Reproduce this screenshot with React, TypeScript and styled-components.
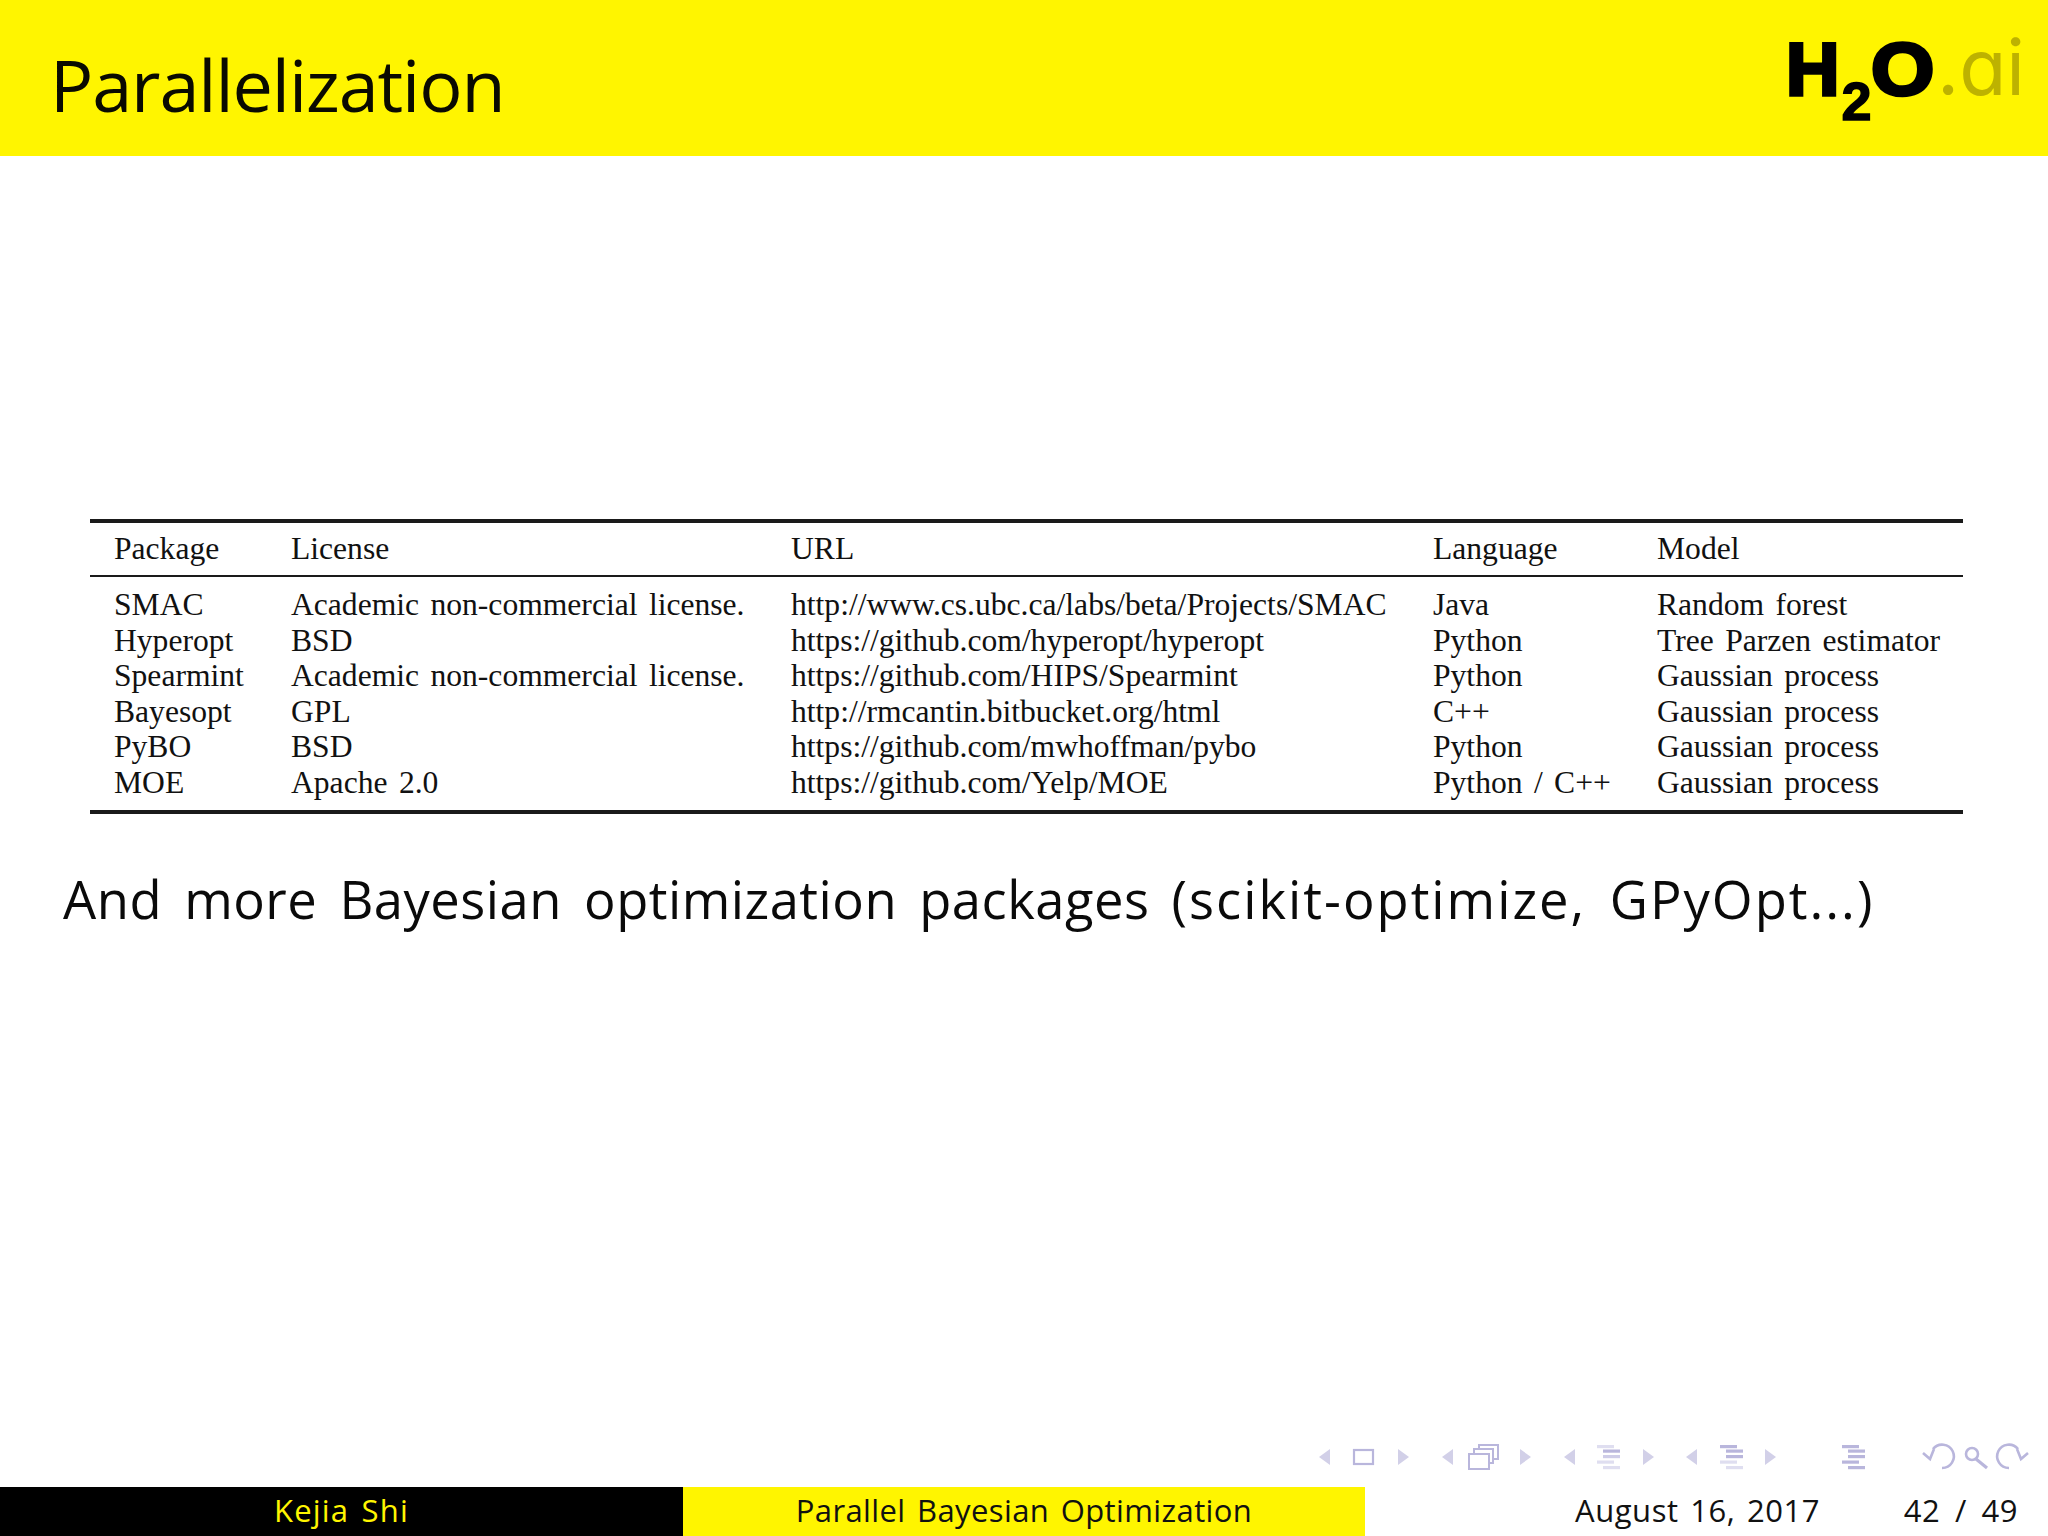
import React from "react";
import styled, { createGlobalStyle } from "styled-components";

const Global = createGlobalStyle`
  html, body { margin: 0; padding: 0; background: #fff; }
  #root { width: 2048px; height: 1536px; overflow: hidden; }
`;
const SANS = `"Open Sans", "Noto Sans", sans-serif`;
const YELLOW = "#fff500";
const NAV = "#b9b6dc";
const NAV_MID = "#cfcde8";
const NAV_PALE = "#dfdef0";

const Page = styled.div`
  width: 2048px; height: 1536px; display: flex; flex-direction: column;
  font-family: ${SANS}; color: #000; background: #fff;
`;
const Header = styled.header`
  height: 156px; flex: none; background: ${YELLOW}; display: flex; align-items: center;
  justify-content: space-between; padding: 0 23px 0 50px; box-sizing: border-box;
`;
const Title = styled.h1`
  margin: 0; font-size: 72px; font-weight: 400; line-height: 1; letter-spacing: -1.1px; color: #0a0a00;
  position: relative; top: 6px;
`;
const Logo = styled.div`
  display: flex; align-items: baseline; position: relative; top: -10px; white-space: nowrap;
  font-family: "Liberation Sans", Arial, sans-serif; line-height: 1;
`;
const LogoH = styled.span`font-size: 74px; font-weight: 700; -webkit-text-stroke: 3.5px #000; color: #000;`;
const LogoO = styled.span`
  font-size: 74px; font-weight: 700; -webkit-text-stroke: 3.5px #000; color: #000;
  display: inline-block; transform: scaleX(1.1); margin: 0 5px 0 2px;
`;
const LogoSub = styled.span`font-size: 54px; font-weight: 700; color: #000; -webkit-text-stroke: 1.5px #000; position: relative; top: 25px; margin: 0 1px 0 2px;`;
const LogoLight = styled.span`
  font-family: Inter, ${SANS}; font-weight: 400; font-size: 77px; color: #bdb200; letter-spacing: 0;
  font-feature-settings: "cv11" 1;
`;

const Main = styled.main`
  flex: 1; display: flex; flex-direction: column; padding: 363px 85px 0 90px; min-height: 0;
`;
const Table = styled.div`
  font-family: "Liberation Serif", "Times New Roman", serif; font-size: 31.6px; color: #111;
  border-top: 4px solid #1a1a1a; border-bottom: 4px solid #1a1a1a; padding-bottom: 10px;
`;
const Cols = "177px 500px 642px 224px 1fr";
const HeadRow = styled.div`
  display: grid; grid-template-columns: ${Cols}; padding-left: 24px; height: 52px; align-items: center;
  border-bottom: 2px solid #1a1a1a; margin-bottom: 10px;
`;
const Row = styled.div`
  display: grid; grid-template-columns: ${Cols}; padding-left: 24px; height: 35.5px; align-items: center;
  white-space: nowrap; word-spacing: 3.5px;
`;
const Url = styled.span`word-spacing: 0;`;
const Body = styled.p`
  margin: 49px 0 0 -27px; font-size: 52.5px; line-height: 72px; white-space: nowrap; color: #0a0a0a;
  letter-spacing: 0.5px; word-spacing: 8px;
`;
const BodyTail = styled.span`letter-spacing: 2px;`;
const NavBar = styled.div`
  flex: none; height: 26px; margin-bottom: 17px; padding-left: 1319px; display: flex; align-items: center;
`;
const NavIcon = styled.svg<{ $gap: number }>`
  flex: none; margin-left: ${(p) => p.$gap}px; display: block; overflow: visible;
`;
const Footer = styled.footer`
  flex: none; height: 49px; display: grid; grid-template-columns: 683px 682px 1fr; font-size: 31px; line-height: 46px;
  letter-spacing: 0.4px; word-spacing: 3px;
`;
const FootLeft = styled.div`background: #000; color: ${YELLOW}; text-align: center; letter-spacing: 1.2px;`;
const FootMid = styled.div`background: ${YELLOW}; color: #111; text-align: center;`;
const FootRight = styled.div`display: flex; padding: 0 30px 0 210px; justify-content: space-between; color: #111; letter-spacing: 0.55px;`;
const PageNo = styled.span`word-spacing: 6px;`;

const TriL = ({ gap }: { gap: number }) => (
  <NavIcon $gap={gap} width={11} height={16} viewBox="0 0 11 16"><path d="M11 0V16L0 8Z" fill="#d2d0e8" /></NavIcon>
);
const TriR = ({ gap }: { gap: number }) => (
  <NavIcon $gap={gap} width={11} height={16} viewBox="0 0 11 16"><path d="M0 0V16L11 8Z" fill="#d2d0e8" /></NavIcon>
);
const lineRows = [
  { y: 1, x: 0 },
  { y: 5.5, x: 6 },
  { y: 11, x: 6 },
  { y: 16.5, x: 0 },
  { y: 22, x: 6 },
];
const Lines = ({ gap, tones }: { gap: number; tones: string[] }) => (
  <NavIcon $gap={gap} width={23} height={26} viewBox="0 0 23 26">
    {lineRows.map((r, i) => (
      <rect key={r.y} x={r.x} y={r.y} width={17} height={3.2} fill={tones[i]} />
    ))}
  </NavIcon>
);

const rows = [
  ["SMAC", "Academic non-commercial license.", "http://www.cs.ubc.ca/labs/beta/Projects/SMAC", "Java", "Random forest"],
  ["Hyperopt", "BSD", "https://github.com/hyperopt/hyperopt", "Python", "Tree Parzen estimator"],
  ["Spearmint", "Academic non-commercial license.", "https://github.com/HIPS/Spearmint", "Python", "Gaussian process"],
  ["Bayesopt", "GPL", "http://rmcantin.bitbucket.org/html", "C++", "Gaussian process"],
  ["PyBO", "BSD", "https://github.com/mwhoffman/pybo", "Python", "Gaussian process"],
  ["MOE", "Apache 2.0", "https://github.com/Yelp/MOE", "Python / C++", "Gaussian process"],
];

export default function App() {
  return (
    <Page>
      <Global />
      <Header>
        <Title>Parallelization</Title>
        <Logo>
          <LogoH>H</LogoH><LogoSub>2</LogoSub><LogoO>O</LogoO><LogoLight>.ai</LogoLight>
        </Logo>
      </Header>
      <Main>
        <Table>
          <HeadRow>
            <span>Package</span><span>License</span><span>URL</span><span>Language</span><span>Model</span>
          </HeadRow>
          {rows.map((r) => (
            <Row key={r[0]}>
              <span>{r[0]}</span><span>{r[1]}</span><Url>{r[2]}</Url><span>{r[3]}</span><span>{r[4]}</span>
            </Row>
          ))}
        </Table>
        <Body>And more Bayesian optimization packages <BodyTail>(scikit-optimize, GPyOpt...)</BodyTail></Body>
      </Main>
      <NavBar>
        <TriL gap={0} />
        <NavIcon $gap={23} width={21} height={16} viewBox="0 0 21 16"><rect x="1" y="1" width="19" height="14" fill="none" stroke={NAV} strokeWidth="2.2" /></NavIcon>
        <TriR gap={24} />
        <TriL gap={33} />
        <NavIcon $gap={15} width={31} height={26} viewBox="0 0 31 26">
          <g fill="#fff" stroke={NAV} strokeWidth="2">
            <rect x="11" y="1" width="19" height="14" />
            <rect x="6" y="5" width="19" height="14" />
            <rect x="1" y="10" width="20" height="15" />
          </g>
        </NavIcon>
        <TriR gap={21} />
        <TriL gap={33} />
        <Lines gap={22} tones={[NAV_PALE, NAV, NAV_MID, NAV_PALE, NAV_PALE]} />
        <TriR gap={23} />
        <TriL gap={32} />
        <Lines gap={23} tones={[NAV, NAV, NAV, NAV_PALE, NAV_PALE]} />
        <TriR gap={22} />
        <Lines gap={66} tones={[NAV, NAV, NAV, NAV, NAV]} />
        <NavIcon $gap={58} width={31} height={26} viewBox="0 0 31 26">
          <path d="M10 5A11.7 11.7 0 1 1 19 24" fill="none" stroke={NAV} strokeWidth="2.6" />
          <path d="M0 9L7 15L11 5" fill="none" stroke={NAV} strokeWidth="2.6" />
        </NavIcon>
        <NavIcon $gap={11} width={23} height={26} viewBox="0 0 23 26">
          <circle cx="7" cy="10" r="6" fill="none" stroke={NAV} strokeWidth="2.6" />
          <path d="M11 15L22 24" stroke={NAV} strokeWidth="3.2" />
        </NavIcon>
        <NavIcon $gap={9} width={31} height={26} viewBox="0 0 31 26">
          <path d="M21 5A11.7 11.7 0 1 0 12 24" fill="none" stroke={NAV} strokeWidth="2.6" />
          <path d="M31 9L24 15L20 5" fill="none" stroke={NAV} strokeWidth="2.6" />
        </NavIcon>
      </NavBar>
      <Footer>
        <FootLeft>Kejia Shi</FootLeft>
        <FootMid>Parallel Bayesian Optimization</FootMid>
        <FootRight><span>August 16, 2017</span><PageNo>42 / 49</PageNo></FootRight>
      </Footer>
    </Page>
  );
}
